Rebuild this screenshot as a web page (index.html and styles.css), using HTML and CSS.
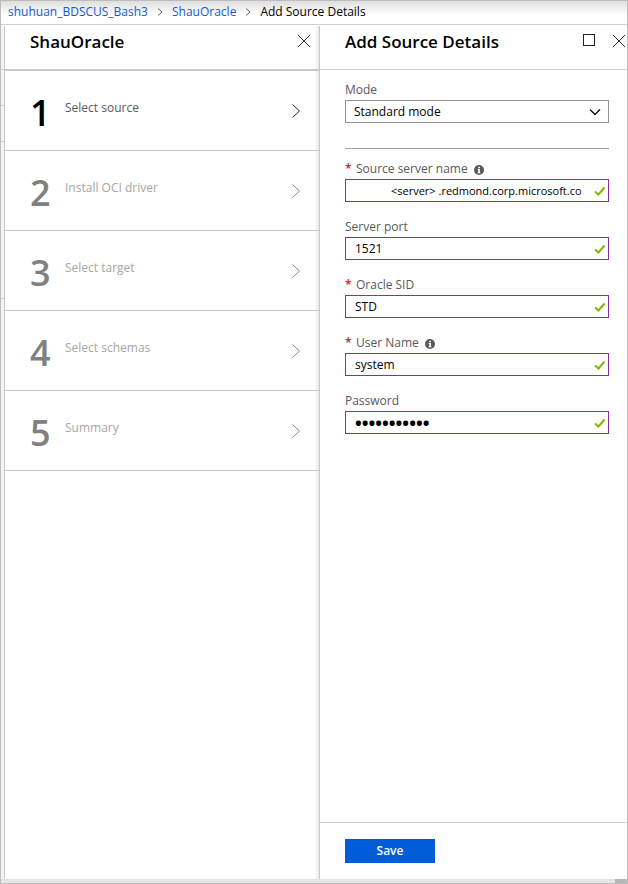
FILE: index.html
```html
<!DOCTYPE html>
<html lang="en">
<head>
<meta charset="utf-8">
<meta name="viewport" content="width=device-width, initial-scale=1">
<title>Add Source Details</title>
<link rel="stylesheet" href="styles.css">
</head>
<body>
<svg class="sprite" aria-hidden="true">
  <symbol id="close" viewBox="0 0 14 14"><path d="M1 1L13 13M13 1L1 13"/></symbol>
  <symbol id="next" viewBox="0 0 10 16"><path d="M1.5 1.5L8.5 8L1.5 14.5"/></symbol>
  <symbol id="crumb" viewBox="0 0 6 10"><path d="M1 1.5L5 5L1 8.5"/></symbol>
  <symbol id="check" viewBox="0 0 12 10"><path d="M1 5.500L4.500 8.500L10.500 1.500"/></symbol>
  <symbol id="info" viewBox="0 0 10 10"><circle cx="5" cy="5" r="5"/><path d="M4.200 1.700h1.700v1.500H4.200zM3.600 4.100h2.300v3.300h.7v.9H3.500v-.9h.7V5h-.6z"/></symbol>
</svg>
<div class="window">
  <nav class="crumbs" aria-label="Breadcrumb">
    <a href="#bash">shuhuan_BDSCUS_Bash3</a>
    <svg class="crumb-icon" aria-hidden="true"><use href="#crumb"/></svg>
    <a href="#oracle">ShauOracle</a>
    <svg class="crumb-icon" aria-hidden="true"><use href="#crumb"/></svg>
    <span>Add Source Details</span>
  </nav>
  <div class="blades">
    <div class="edge"><i class="edge-head"></i><i class="edge-row"></i><i class="edge-row"></i><i class="edge-list"></i></div>
    <section class="blade steps-blade">
      <header class="blade-head">
        <h2>ShauOracle</h2>
        <button class="icon-button" type="button" aria-label="Close"><svg class="close-icon"><use href="#close"/></svg></button>
      </header>
      <ol class="steps">
        <li><button class="step current" type="button"><b>1</b><span>Select source</span><svg class="next-icon"><use href="#next"/></svg></button></li>
        <li><button class="step" type="button"><b>2</b><span>Install OCI driver</span><svg class="next-icon"><use href="#next"/></svg></button></li>
        <li><button class="step" type="button"><b>3</b><span>Select target</span><svg class="next-icon"><use href="#next"/></svg></button></li>
        <li><button class="step" type="button"><b>4</b><span>Select schemas</span><svg class="next-icon"><use href="#next"/></svg></button></li>
        <li><button class="step" type="button"><b>5</b><span>Summary</span><svg class="next-icon"><use href="#next"/></svg></button></li>
      </ol>
    </section>
    <section class="blade details-blade">
      <header class="blade-head">
        <h2>Add Source Details</h2>
        <button class="icon-button" type="button" aria-label="Maximize"><i class="maximize"></i></button>
        <button class="icon-button" type="button" aria-label="Close"><svg class="close-icon"><use href="#close"/></svg></button>
      </header>
      <form class="form">
        <div class="fields">
          <div class="field">
            <div class="label"><label for="mode">Mode</label></div>
            <div class="control">
              <select id="mode"><option>Standard mode</option></select>
              <svg class="chevron" viewBox="0 0 12 8" aria-hidden="true"><path d="M1 1.500L6 6.500L11 1.500"/></svg>
            </div>
          </div>
          <hr>
          <div class="field">
            <div class="label"><em>*</em><label for="server">Source server name</label><svg class="info-icon"><use href="#info"/></svg></div>
            <div class="control"><input class="server" id="server" type="text" value="&lt;server&gt; .redmond.corp.microsoft.co"><svg class="check-icon"><use href="#check"/></svg></div>
          </div>
          <div class="field">
            <div class="label"><label for="port">Server port</label></div>
            <div class="control"><input id="port" type="text" value="1521"><svg class="check-icon"><use href="#check"/></svg></div>
          </div>
          <div class="field">
            <div class="label"><em>*</em><label for="sid">Oracle SID</label></div>
            <div class="control"><input id="sid" type="text" value="STD"><svg class="check-icon"><use href="#check"/></svg></div>
          </div>
          <div class="field">
            <div class="label"><em>*</em><label for="user">User Name</label><svg class="info-icon"><use href="#info"/></svg></div>
            <div class="control"><input id="user" type="text" value="system"><svg class="check-icon"><use href="#check"/></svg></div>
          </div>
          <div class="field">
            <div class="label"><label for="password">Password</label></div>
            <div class="control"><input class="password" id="password" type="password" value="password123"><svg class="check-icon"><use href="#check"/></svg></div>
          </div>
        </div>
        <footer class="actions"><button class="save" type="button">Save</button></footer>
      </form>
    </section>
  </div>
  <div class="scrollbar"><i></i></div>
</div>
</body>
</html>
```
FILE: styles.css
```css
* { box-sizing: border-box; }

body {
  margin: 0;
  font-family: "Open Sans", "Noto Sans", sans-serif;
  font-size: 12px;
  line-height: 16px;
  color: #000;
}

button, input, select { font: inherit; color: inherit; }

button {
  padding: 0;
  border: 0;
  background: none;
}

.sprite { position: absolute; width: 0; height: 0; }

.window {
  display: flex;
  flex-direction: column;
  min-height: 100vh;
  border: 1px solid #bdbdbd;
  background: #fff;
}

.crumbs {
  display: flex;
  align-items: center;
  gap: 9px;
  height: 24px;
  padding: 0 7px 2px;
  border-bottom: 1px solid #d0d0d0;
  background: linear-gradient(#dedede, #fff 14px);
}

.crumbs a { color: #1559d6; text-decoration: none; }

.crumb-icon {
  width: 6px;
  height: 10px;
  fill: none;
  stroke: #666;
}

.blades { display: flex; flex: 1; padding-top: 1px; }

.edge {
  width: 4px;
  border-right: 1px solid #c6c6c6;
  background: #f5f5f5;
}

.edge i { display: block; border-bottom: 1px solid #d0d0d0; }
.edge-head { height: 44px; }
.edge-row { height: 36px; }
.edge-list { height: 157px; }

.blade { display: flex; flex-direction: column; }

.steps-blade { flex: 315; min-width: 0; box-shadow: inset -4px 0 4px -3px #ddd; }

.details-blade {
  flex: 308;
  min-width: 0;
  border-left: 1px solid #c8c8c8;
}

.blade-head {
  display: flex;
  align-items: flex-start;
  height: 44px;
  padding: 4px 0 0 25px;
  border-bottom: 1px solid #d0d0d0;
}

.steps-blade .blade-head { height: 45px; padding-right: 8px; border-bottom: 2px solid #c8c8c8; }
.details-blade .blade-head { gap: 17px; padding-right: 1px; }

h2 {
  flex: 1;
  margin: 0;
  font-size: 17px;
  font-weight: 600;
  line-height: 24px;
  white-space: nowrap;
}

.icon-button { display: flex; padding-top: 4px; }

.close-icon {
  width: 14px;
  height: 14px;
  fill: none;
  stroke: #333;
}

.maximize { width: 12px; height: 12px; border: 1px solid #222; }

.steps { margin: 0; padding: 0; list-style: none; }

.step {
  display: flex;
  align-items: center;
  width: 100%;
  height: 80px;
  padding: 0 18px 0 25px;
  border-bottom: 1px solid #c8c8c8;
  color: #a6a6a6;
  text-align: left;
}

.step b {
  width: 35px;
  padding-top: 4px;
  font-size: 36px;
  font-weight: 600;
  line-height: 40px;
  color: #808080;
}

.step span { flex: 1; padding-bottom: 6px; }
.step.current { color: #595959; }
.step.current b { color: #000; }

.next-icon {
  width: 10px;
  height: 16px;
  fill: none;
  stroke: #888;
}

.current .next-icon { stroke: #222; }

.form { display: flex; flex: 1; flex-direction: column; }

.fields {
  display: flex;
  flex: 1;
  flex-direction: column;
  gap: 16px;
  padding: 12px 18px 16px 25px;
}

.label {
  display: flex;
  align-items: center;
  height: 16px;
  margin-bottom: 2px;
  color: #595959;
}

.field + .field { padding-top: 1px; }

.label em {
  width: 11px;
  font-style: normal;
  font-weight: 600;
  color: #e00b1c;
}

.info-icon { width: 10px; height: 10px; margin: 2px 0 0 6px; fill: #595959; }
#info path { fill: #fff; }

.control { position: relative; }

.control input, .control select {
  display: block;
  width: 100%;
  height: 23px;
  padding: 0 24px 0 9px;
  border: 1px solid #8a2da5;
  border-radius: 0;
  background: #fff;
  outline: 0;
}

.control select {
  padding-left: 8px;
  border-color: #949494;
  appearance: none;
}

.control .server { padding-left: 45px; padding-right: 20px; font-size: 11px; }
.control .password { font-size: 18px; font-weight: 700; }

.chevron {
  position: absolute;
  top: 8px;
  right: 8px;
  width: 12px;
  height: 8px;
  fill: none;
  stroke: #111;
  stroke-width: 1.4;
  pointer-events: none;
}

.check-icon {
  position: absolute;
  top: 7px;
  right: 3px;
  width: 12px;
  height: 10px;
  fill: none;
  stroke: #7fba00;
  stroke-width: 2;
}

hr {
  width: 100%;
  margin: 9px 0 -4px;
  border: 0;
  border-top: 1px solid #9da0a2;
}

.actions { padding: 16px 25px; border-top: 1px solid #d0d0d0; }

.save {
  width: 90px;
  height: 24px;
  background: #015cda;
  color: #fff;
  font-weight: 600;
}

.scrollbar { display: flex; justify-content: flex-end; height: 4px; background: #e5e5e5; }
.scrollbar i { width: 12px; background: #b5b5b5; }
```
